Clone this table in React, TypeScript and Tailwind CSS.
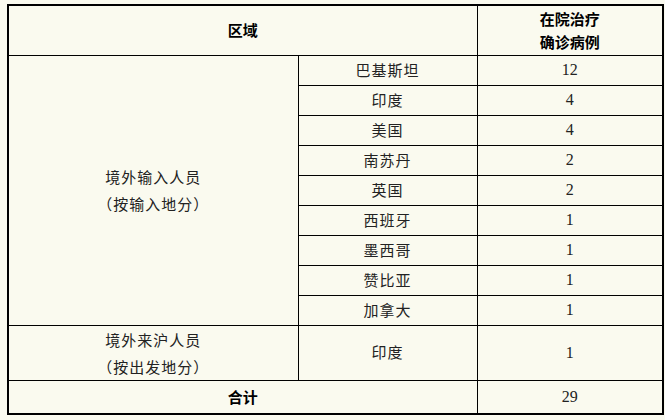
const countries: [string, number][] = [
  ["巴基斯坦", 12],
  ["印度", 4],
  ["美国", 4],
  ["南苏丹", 2],
  ["英国", 2],
  ["西班牙", 1],
  ["墨西哥", 1],
  ["赞比亚", 1],
  ["加拿大", 1],
]

const cjk = "font-['Noto_Sans_CJK_SC',sans-serif]"
const num = "font-['Liberation_Serif',serif] text-[16px]"
const cell = "border border-black text-center align-middle p-0"

export default function App() {
  return (
    <div className={`w-[665px] h-[420px] bg-[#fafaef] pt-[4px] pl-[7px] text-[#222] ${cjk}`}>
      <table className="table-fixed border-collapse border-2 border-black w-[655px]">
        <colgroup>
          <col className="w-[290px]" />
          <col className="w-[179px]" />
          <col className="w-[186px]" />
        </colgroup>
        <tbody>
          <tr className="h-[50px]">
            <td colSpan={2} className={`${cell} font-bold text-[15px] text-black`}>
              区域
            </td>
            <td className={`${cell} font-bold text-[15px] leading-[23px] text-black`}>
              在院治疗
              <br />
              确诊病例
            </td>
          </tr>
          {countries.map(([name, n], i) => (
            <tr key={name} className="h-[30px]">
              {i === 0 && (
                <td rowSpan={countries.length} className={`${cell} text-[15px] leading-[27px] tracking-[1px]`}>
                  境外输入人员
                  <br />
                  （按输入地分）
                </td>
              )}
              <td className={`${cell} text-[15px] tracking-[1px]`}>{name}</td>
              <td className={`${cell} ${num}`}>{n}</td>
            </tr>
          ))}
          <tr className="h-[55px]">
            <td className={`${cell} text-[15px] leading-[27px] tracking-[1px]`}>
              境外来沪人员
              <br />
              （按出发地分）
            </td>
            <td className={`${cell} text-[15px] tracking-[1px]`}>印度</td>
            <td className={`${cell} ${num}`}>1</td>
          </tr>
          <tr className="h-[34px]">
            <td colSpan={2} className={`${cell} font-bold text-[15px] text-black`}>
              合计
            </td>
            <td className={`${cell} ${num}`}>29</td>
          </tr>
        </tbody>
      </table>
    </div>
  )
}
